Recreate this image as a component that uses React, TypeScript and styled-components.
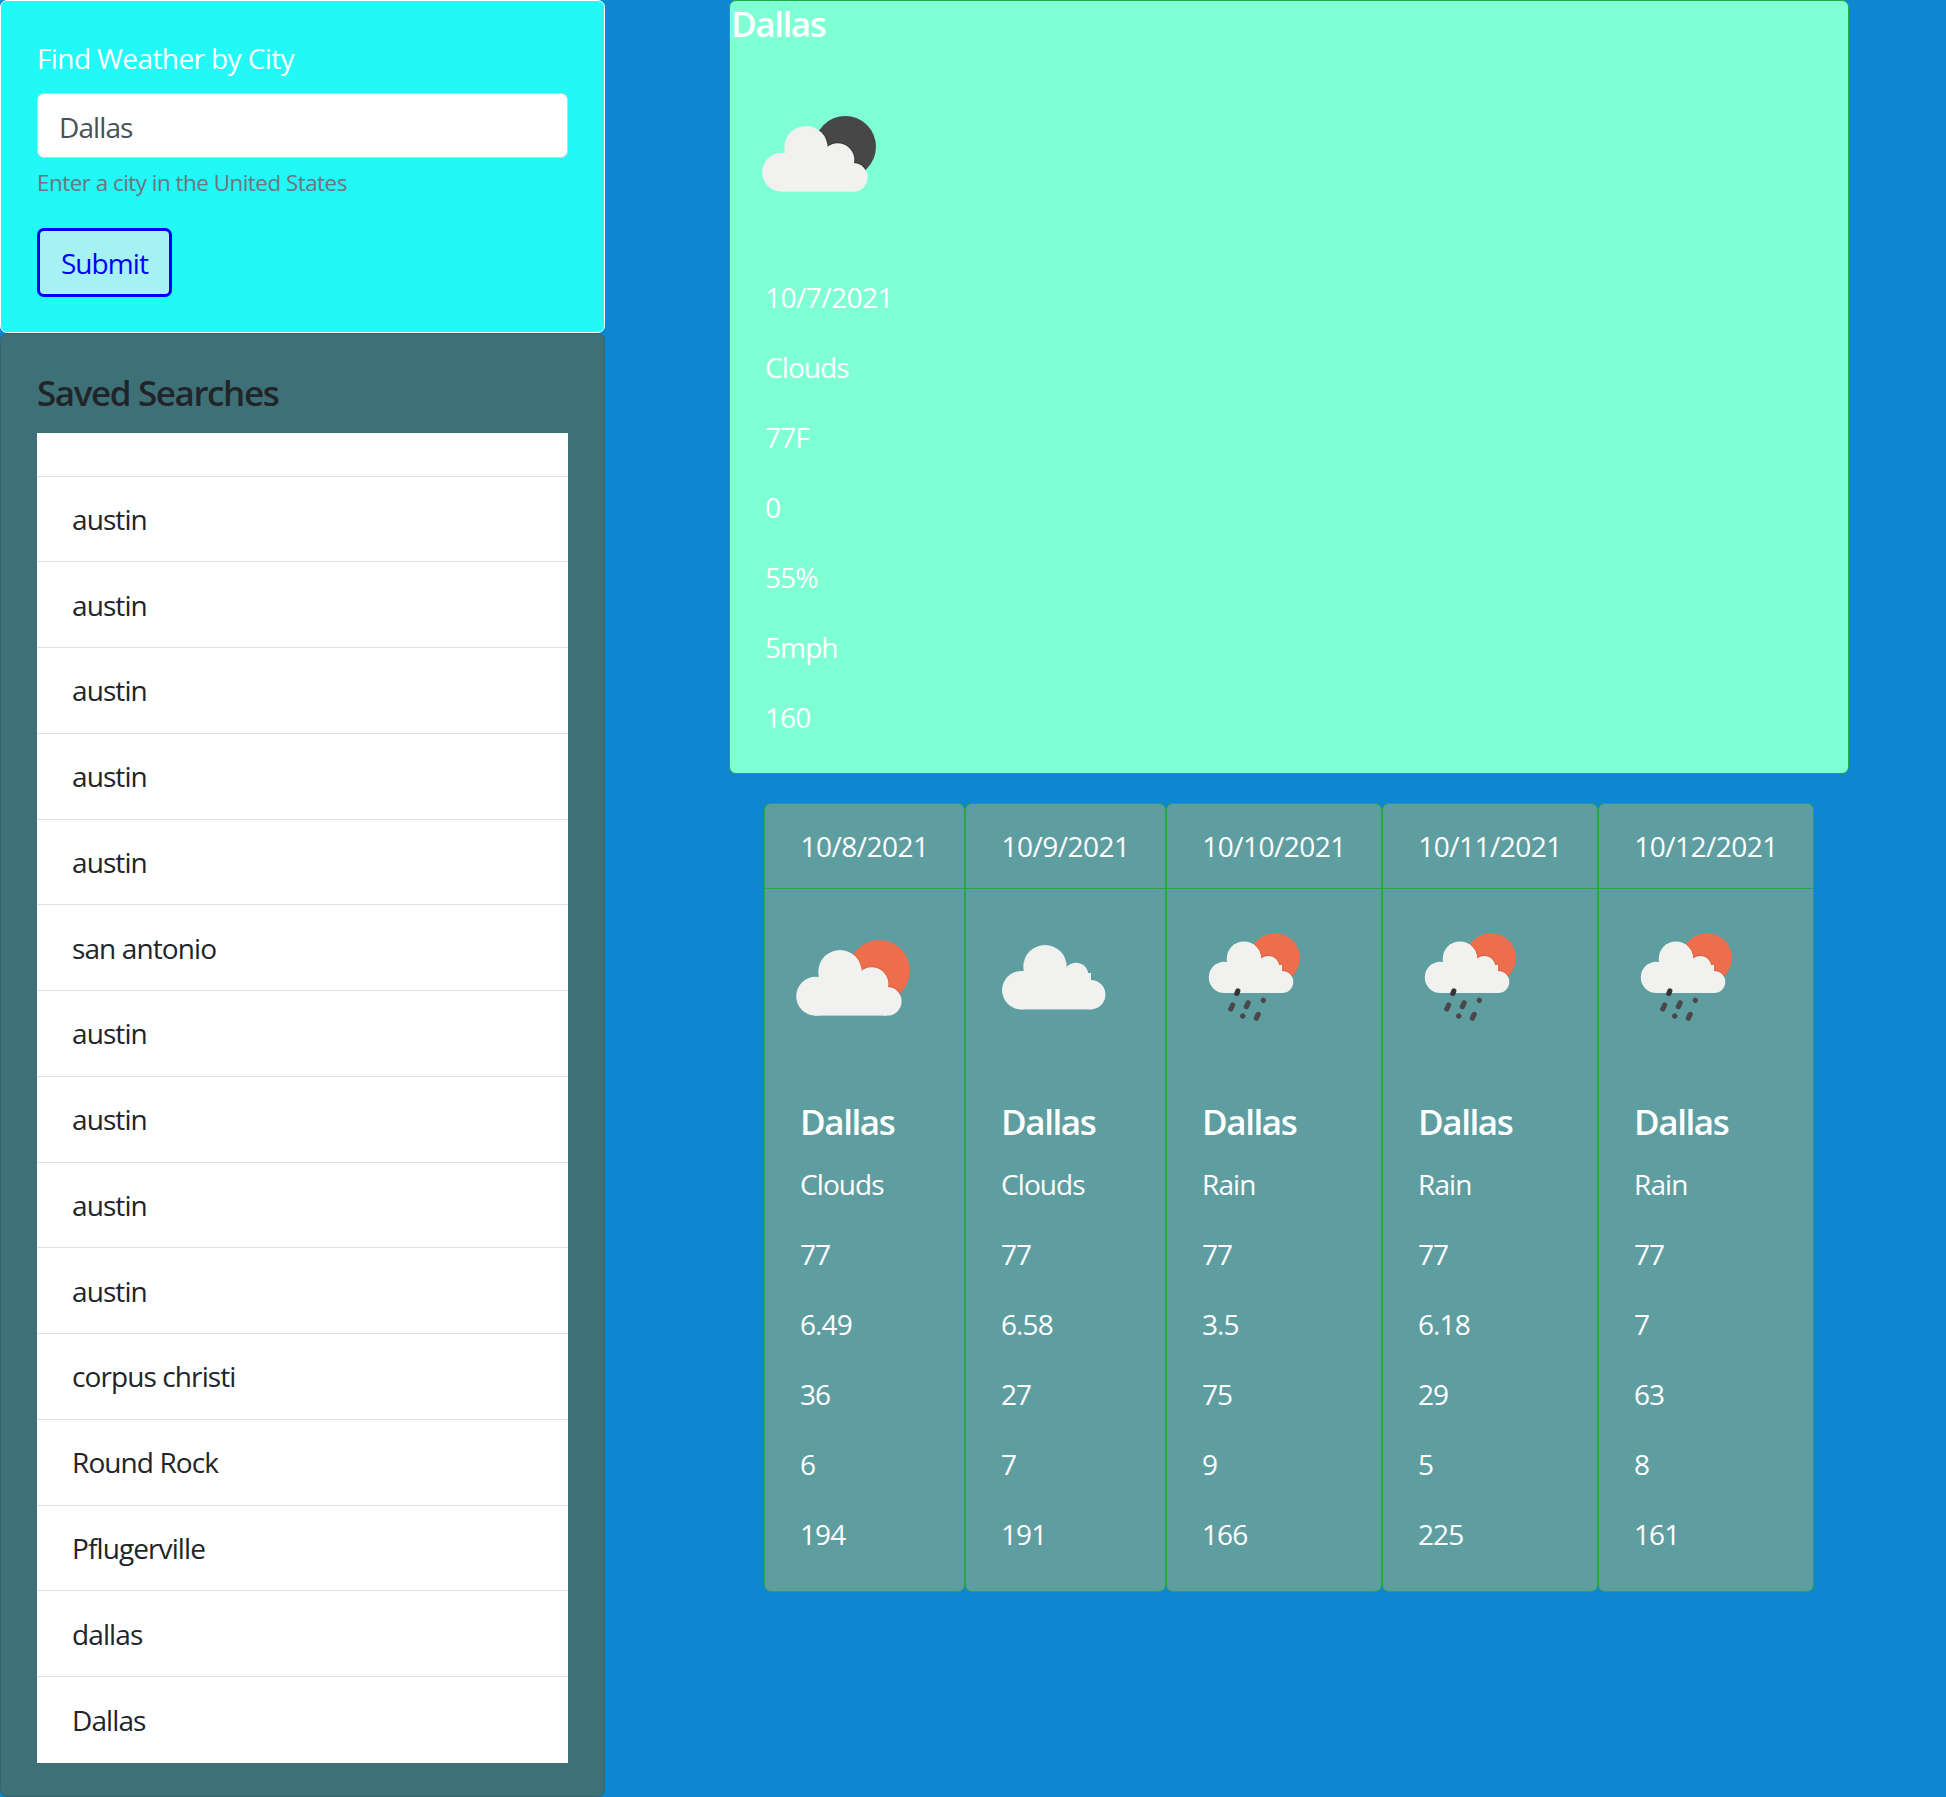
import { useId } from 'react';
import styled, { createGlobalStyle } from 'styled-components';

type IconKind = 'cloudsDay' | 'cloudsNight' | 'cloud' | 'rain';

interface Day {
  date: string;
  kind: IconKind;
  x: number;
  y: number;
  main: string;
  temp: string;
  wind: string;
  humidity: string;
  uv: string;
  aqi: string;
}

const saved = [
  '', 'austin', 'austin', 'austin', 'austin', 'austin', 'san antonio', 'austin', 'austin', 'austin', 'austin',
  'corpus christi', 'Round Rock', 'Pflugerville', 'dallas', 'Dallas',
];

const current = ['10/7/2021', 'Clouds', '77F', '0', '55%', '5mph', '160'];

const days: Day[] = [
  { date: '10/8/2021', kind: 'cloudsDay', x: -4, y: 16, main: 'Clouds', temp: '77', wind: '6.49', humidity: '36', uv: '6', aqi: '194' },
  { date: '10/9/2021', kind: 'cloud', x: 1, y: 21, main: 'Clouds', temp: '77', wind: '6.58', humidity: '27', uv: '7', aqi: '191' },
  { date: '10/10/2021', kind: 'rain', x: 7, y: 9, main: 'Rain', temp: '77', wind: '3.5', humidity: '75', uv: '9', aqi: '166' },
  { date: '10/11/2021', kind: 'rain', x: 7, y: 9, main: 'Rain', temp: '77', wind: '6.18', humidity: '29', uv: '5', aqi: '225' },
  { date: '10/12/2021', kind: 'rain', x: 7, y: 9, main: 'Rain', temp: '77', wind: '7', humidity: '63', uv: '8', aqi: '161' },
];

function CloudShape({ kind, fill, stroke, width }: { kind: IconKind; fill: string; stroke?: string; width?: number }) {
  if (kind === 'cloud') {
    return (
      <g fill={fill} stroke={stroke} strokeWidth={width}>
        <circle cx="19.3" cy="45.2" r="19.2" />
        <circle cx="43" cy="21.7" r="21.7" />
        <circle cx="74" cy="30" r="12.3" />
        <circle cx="88.7" cy="49.7" r="14.7" />
        <rect x="19" y="28" width="70" height="36.4" stroke="none" />
      </g>
    );
  }
  if (kind === 'rain') {
    return (
      <g fill={fill} stroke={stroke} strokeWidth={width}>
        <circle cx="15.4" cy="44.4" r="15.6" />
        <circle cx="35" cy="25.7" r="17.3" />
        <circle cx="59.3" cy="34" r="11" />
        <circle cx="73.3" cy="49" r="11" />
        <rect x="15" y="32" width="58" height="28" stroke="none" />
      </g>
    );
  }
  return (
    <g fill={fill} stroke={stroke} strokeWidth={width}>
      <circle cx="19.7" cy="56.3" r="19.5" />
      <circle cx="44" cy="31.7" r="21.7" />
      <circle cx="75.7" cy="44" r="16.7" />
      <circle cx="91.3" cy="61.3" r="14.3" />
      <rect x="19" y="42" width="72" height="33.6" stroke="none" />
    </g>
  );
}

function WeatherIcon({ kind, x, y }: { kind: IconKind; x: number; y: number }) {
  const clip = useId();
  const sun =
    kind === 'rain' ? { cx: 66, cy: 25, r: 25 } : kind === 'cloud' ? null : { cx: 83.3, cy: 30.7, r: 30.7 };
  const sunFill = kind === 'cloudsNight' ? '#484748' : '#ec6e4c';
  const edge = kind === 'cloudsNight' ? '#2c2b2c' : '#e05a3c';

  return (
    <IconSvg viewBox={`${-x} ${-y} 175 175`} aria-hidden="true">
      {sun && (
        <>
          <clipPath id={clip}>
            <circle {...sun} />
          </clipPath>
          <circle {...sun} fill={sunFill} />
          <g clipPath={`url(#${clip})`}>
            <CloudShape kind={kind} fill="none" stroke={edge} width={1.6} />
          </g>
        </>
      )}
      <CloudShape kind={kind} fill="#f1f2f0" />
      {kind === 'rain' && (
        <g stroke="#4a484a" strokeWidth="5.2" strokeLinecap="round">
          <line x1="27.8" y1="60.4" x2="28.8" y2="58" stroke="#353435" />
          <line x1="21.8" y1="76" x2="23.6" y2="72" />
          <line x1="37.4" y1="73.6" x2="39.2" y2="69.8" />
          <line x1="47.4" y1="85.2" x2="49.2" y2="81.4" />
          <line x1="54.3" y1="67.3" x2="54.4" y2="67.4" />
          <line x1="33.7" y1="83" x2="33.8" y2="83.1" />
        </g>
      )}
    </IconSvg>
  );
}

export default function App() {
  return (
    <>
      <GlobalStyle />
      <Page>
        <Sidebar>
          <SearchCard>
            <FieldLabel htmlFor="city">Find Weather by City</FieldLabel>
            <CityInput id="city" defaultValue="Dallas" />
            <HelpText>Enter a city in the United States</HelpText>
            <SubmitButton type="button">Submit</SubmitButton>
          </SearchCard>
          <SavedCard>
            <SavedTitle>Saved Searches</SavedTitle>
            <SavedList>
              {saved.map((city, i) => (
                <SavedItem key={i} $empty={city === ''}>
                  {city}
                </SavedItem>
              ))}
            </SavedList>
          </SavedCard>
        </Sidebar>

        <Main>
          <CurrentCard>
            <CurrentTitle>Dallas</CurrentTitle>
            <CurrentIcon>
              <WeatherIcon kind="cloudsNight" x={31} y={58} />
            </CurrentIcon>
            <CurrentBody>
              {current.map((line) => (
                <StatLine key={line}>{line}</StatLine>
              ))}
            </CurrentBody>
          </CurrentCard>

          <Forecast>
            {days.map((day) => (
              <DayCard key={day.date}>
                <DayHeader>{day.date}</DayHeader>
                <DayBody>
                  <DayIcon>
                    <WeatherIcon kind={day.kind} x={day.x} y={day.y} />
                  </DayIcon>
                  <DayTitle>Dallas</DayTitle>
                  <StatLine>{day.main}</StatLine>
                  <StatLine>{day.temp}</StatLine>
                  <StatLine>{day.wind}</StatLine>
                  <StatLine>{day.humidity}</StatLine>
                  <StatLine>{day.uv}</StatLine>
                  <StatLine>{day.aqi}</StatLine>
                </DayBody>
              </DayCard>
            ))}
          </Forecast>
        </Main>
      </Page>
    </>
  );
}

const GlobalStyle = createGlobalStyle`
  * {
    box-sizing: border-box;
  }

  body {
    margin: 0;
    background: #0d88d0;
    color: #212529;
    font-family: "Open Sans", "Noto Sans", sans-serif;
    font-size: 28px;
    line-height: 42px;
    letter-spacing: -0.9px;
  }
`;

const Page = styled.div`
  display: flex;
  gap: 124px;
  width: 1946px;
  height: 1797px;
  overflow: hidden;
`;

const Sidebar = styled.aside`
  display: flex;
  flex-direction: column;
  width: 605px;
`;

const SearchCard = styled.form`
  display: flex;
  flex-direction: column;
  flex-shrink: 0;
  align-items: flex-start;
  height: 333px;
  padding: 36px 36px 0;
  background: #22f9f6;
  border: 1px solid #fff;
  border-radius: 7px;
`;

const FieldLabel = styled.label`
  margin-bottom: 14px;
  color: #fff;
  letter-spacing: -0.6px;
`;

const CityInput = styled.input`
  width: 531px;
  height: 65px;
  padding: 2px 21px 0;
  border: 1px solid #ced4da;
  border-radius: 7px;
  background: #fff;
  color: #495057;
  font: inherit;
  letter-spacing: inherit;
`;

const HelpText = styled.small`
  margin-top: 8px;
  margin-bottom: 28px;
  color: #6c757d;
  font-size: 22.4px;
  line-height: 34px;
  letter-spacing: -0.5px;
`;

const SubmitButton = styled.button`
  width: 135px;
  height: 69px;
  padding: 0;
  border: 3px solid #0000ff;
  border-radius: 7px;
  background: #a5f1f4;
  color: #0000ff;
  font: inherit;
  letter-spacing: inherit;
`;

const SavedCard = styled.section`
  flex: 1;
  padding: 38px 36px 33px;
  background: #3e7177;
  border: 1px solid #36666c;
  border-radius: 7px;
`;

const SavedTitle = styled.h3`
  margin: 0 0 19px;
  color: #212529;
  font-size: 35px;
  font-weight: 600;
  line-height: 42px;
  letter-spacing: -1.4px;
`;

const SavedList = styled.ul`
  margin: 0;
  padding: 0;
  list-style: none;
  background: #fff;
`;

const SavedItem = styled.li<{ $empty: boolean }>`
  display: flex;
  align-items: center;
  height: ${(p) => (p.$empty ? '43.5px' : '85.75px')};
  padding: 0 35px;
  border-bottom: 1px solid #dfdfdf;

  &:last-child {
    border-bottom: 0;
  }
`;

const Main = styled.main`
  width: 1120px;
`;

const CurrentCard = styled.section`
  height: 774px;
  background: #7fffd4;
  border: 1px solid #28a745;
  border-radius: 7px;
  color: #fff;
`;

const CurrentTitle = styled.h5`
  margin: 2px 0 13px 1px;
  font-size: 35px;
  font-weight: 600;
  line-height: 42px;
  letter-spacing: -1.4px;
`;

const IconSvg = styled.svg`
  display: block;
  width: 175px;
  height: 175px;
  overflow: visible;
`;

const CurrentIcon = styled.div`
  height: 183px;
  margin-left: 1px;
`;

const CurrentBody = styled.div`
  padding: 35px 35px 0;

  p:first-child {
    letter-spacing: -0.5px;
  }
`;

const StatLine = styled.p`
  margin: 0 0 28px;

  &:last-child {
    margin-bottom: 0;
  }
`;

const Forecast = styled.div`
  display: grid;
  grid-template-columns: 201px 201px 216px 216px 216px;
  margin: 29px 35px 0;
`;

const DayCard = styled.article`
  height: 789px;
  background: #5f9ea0;
  border: 1px solid #28a745;
  border-radius: 7px;
  color: #fff;
`;

const DayHeader = styled.header`
  height: 85px;
  padding-top: 21px;
  border-bottom: 1px solid #28a745;
  text-align: center;
  letter-spacing: -0.5px;
`;

const DayBody = styled.div`
  padding: 35px;
`;

const DayIcon = styled.div`
  height: 177px;
`;

const DayTitle = styled.h5`
  margin: 0 0 20px;
  font-size: 35px;
  font-weight: 600;
  line-height: 42px;
  letter-spacing: -1.4px;
`;
